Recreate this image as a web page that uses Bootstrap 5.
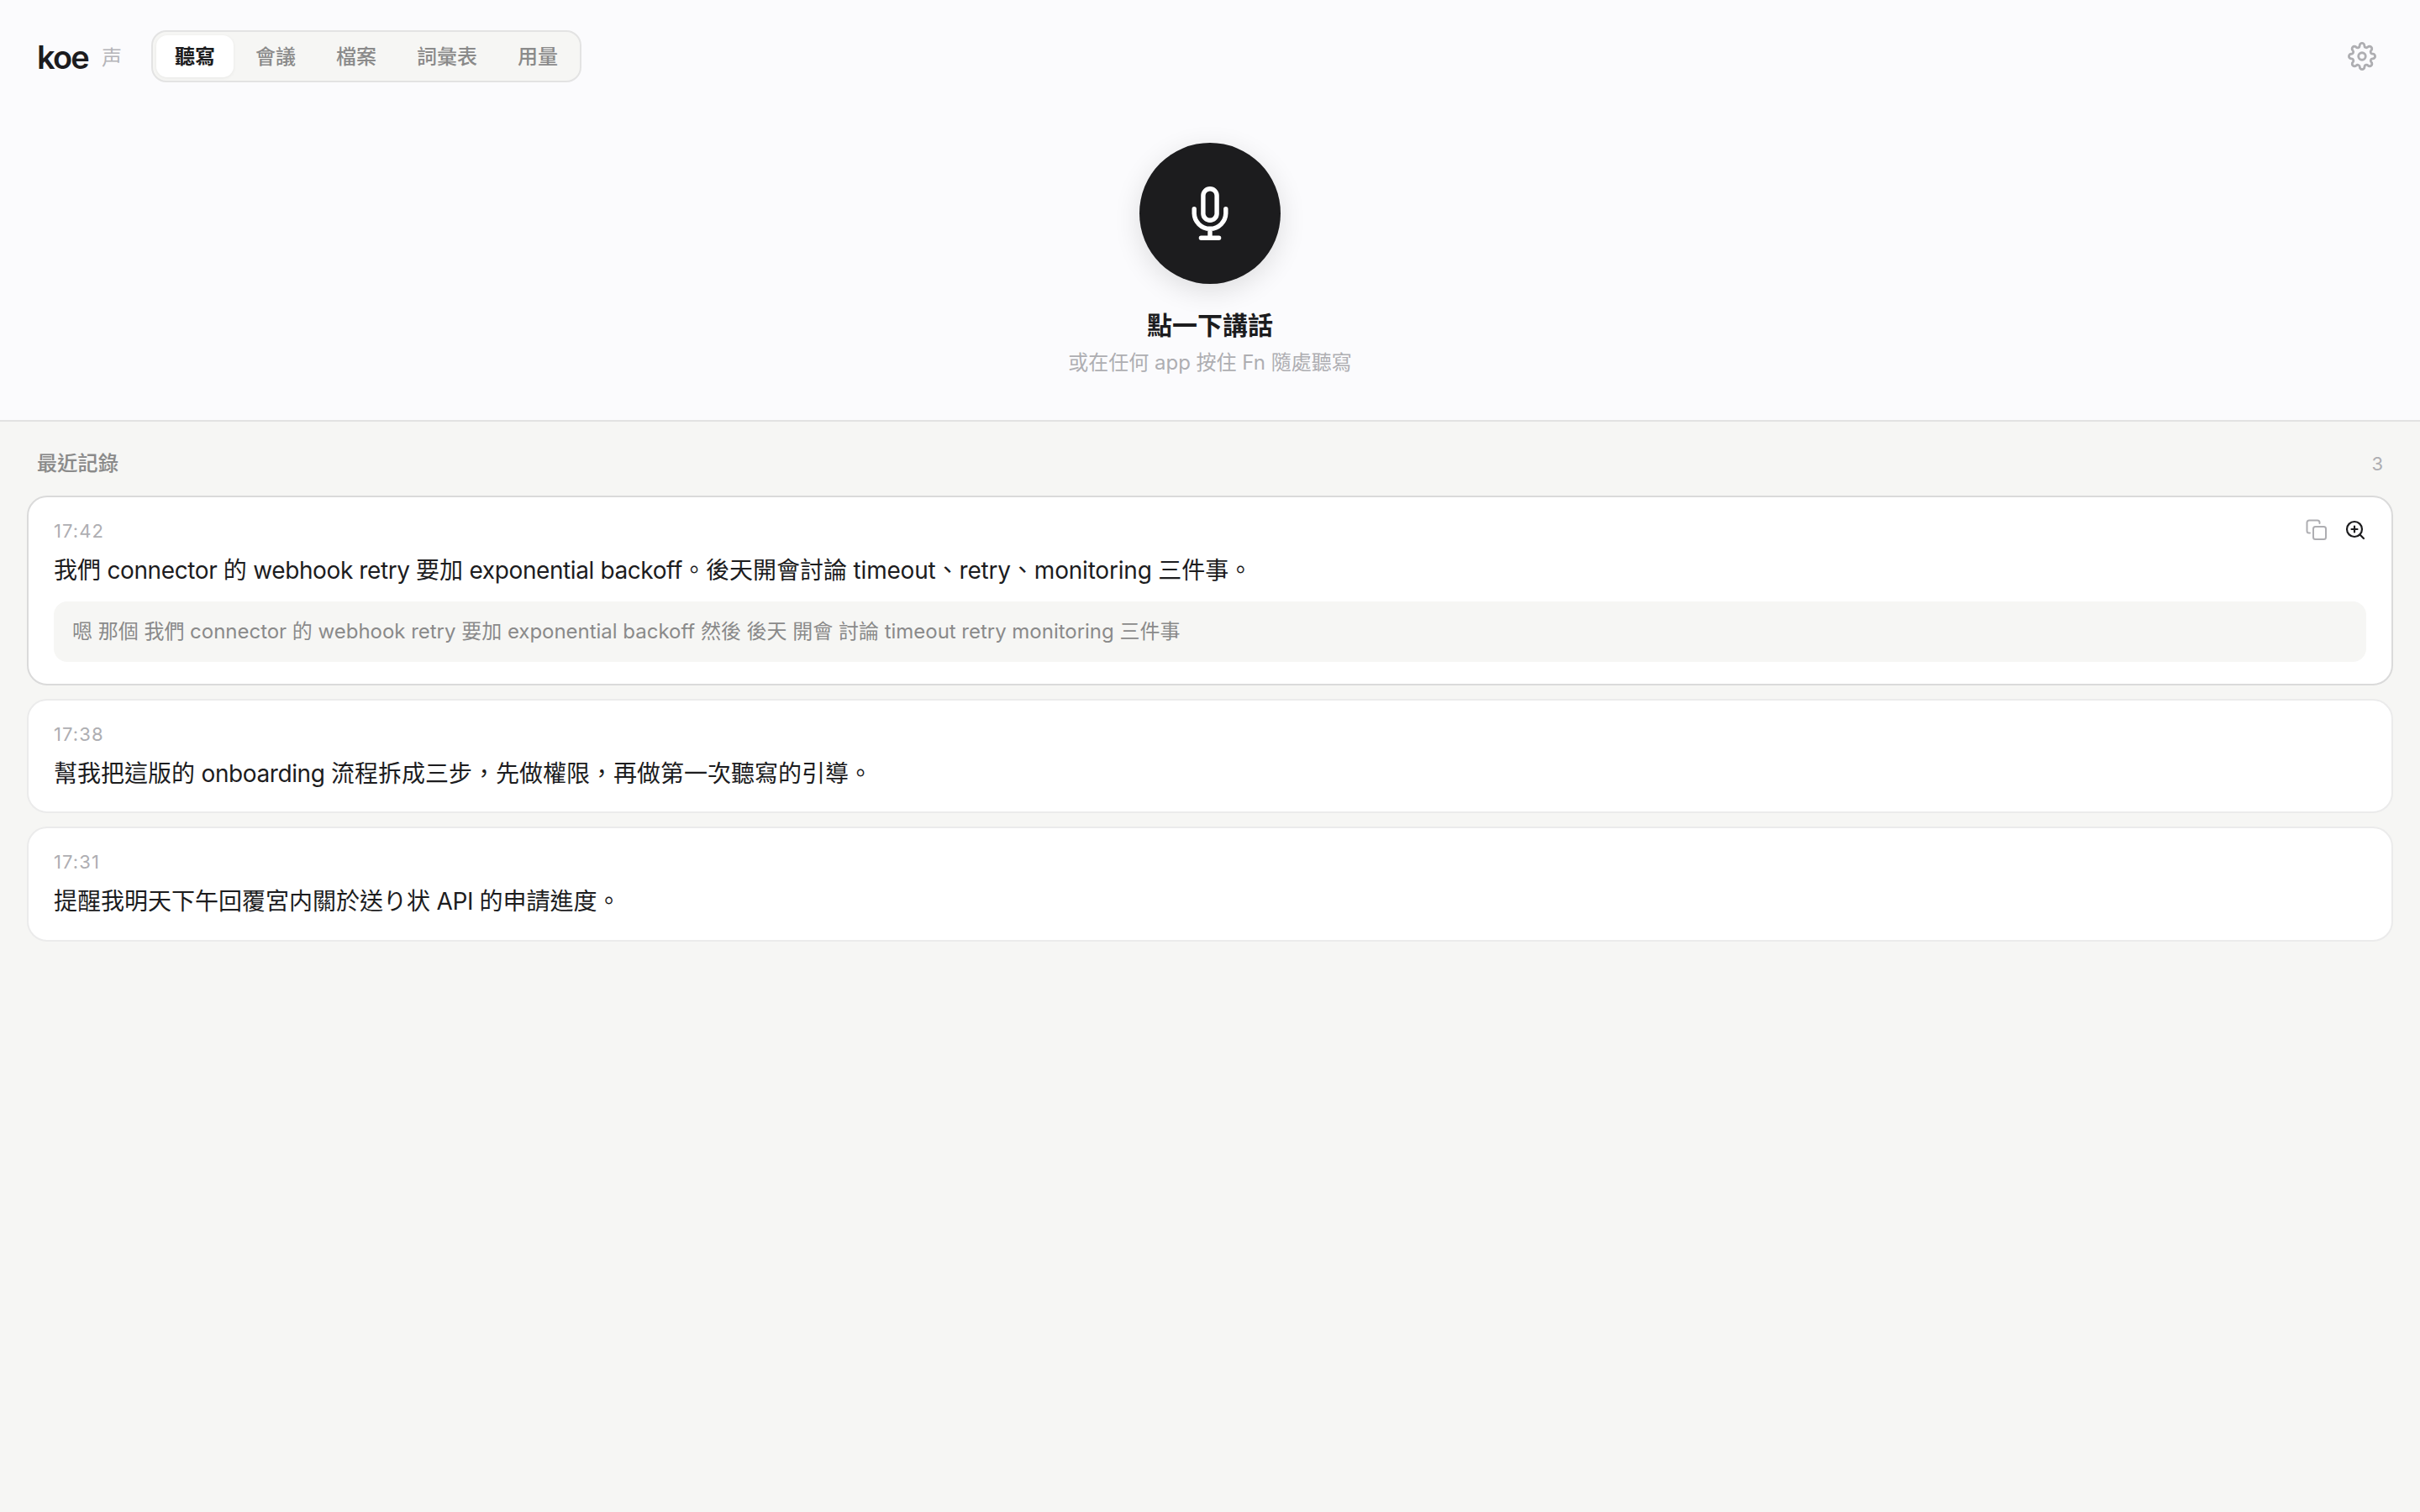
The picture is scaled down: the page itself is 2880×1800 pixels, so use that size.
<!DOCTYPE html>
<html lang="zh-Hant">
<head>
<meta charset="utf-8">
<meta name="viewport" content="width=device-width, initial-scale=1">
<title>koe 声</title>
<link href="https://cdn.jsdelivr.net/npm/bootstrap@5.3.0/dist/css/bootstrap.min.css" rel="stylesheet">
<style>
  body{font-family:Inter,"Noto Sans CJK TC",sans-serif;background:#f6f6f4;color:#1c1c1e;font-size:28px;line-height:40px;min-height:1800px}
  .hero-zone{background:#fbfbfd;border-bottom:2px solid #e2e2e2;height:502px}
  .topbar{padding:36px 44px 0;height:98px}
  .brand-name{font-size:38px;font-weight:600;letter-spacing:-1.8px;line-height:62px;padding:2px 0 0}
  .brand-kanji{font-family:"Noto Sans CJK JP",sans-serif;font-size:24px;font-weight:400;color:#b4b4b8;line-height:62px;margin-left:16px;width:25px}
  .tabs{margin-left:34px;height:62px;border:2px solid #e3e3e3;background:#f6f6f4;border-radius:18px;padding:4px;gap:4px}
  .tabs .nav-link{padding:0 22px;height:50px;line-height:51px;font-size:24px;font-weight:500;color:#8a8a8a;border-radius:13px}
  .tabs .nav-link.active{background:#fff;color:#1c1c1e;font-weight:700;box-shadow:0 1px 4px rgba(0,0,0,.06)}
  .icon-plain{background:none;border:0;padding:0;line-height:0}
  .mic-btn{width:168px;height:168px;background:#1c1c1e;border:0;padding:0;margin-top:72px;box-shadow:0 8px 32px rgba(0,0,0,.12)}
  .mic-title{font-size:30px;font-weight:700;line-height:40px;margin-top:29px}
  .mic-hint{font-size:24px;color:#aeaeb2;line-height:36px;margin-top:7px}
  .list-zone{padding:32px 32px 0}
  .list-head{padding:0 12px;height:36px;margin-bottom:20px;line-height:36px}
  .list-head h2{font-size:24px;font-weight:500;color:#8a8a8a;line-height:36px;margin:0;letter-spacing:.3px;-webkit-text-stroke:.15px #8a8a8a}
  .count,.stamp{font-size:22px;color:#aeaeb2}
  .entry{border:2px solid #ebebeb;border-radius:24px;padding:24px 30px 0;height:136px;background:#fff}
  .entry:last-child{height:137px}
  .entry.open{border-color:#dadada;height:226px}
  .stamp{line-height:32px;letter-spacing:1.1px}
  .actions{gap:20px;height:26px;margin-top:-2px}
  .entry-text{line-height:40px;margin-top:11px;white-space:nowrap}
  .lat{letter-spacing:-.4px}
  .lat-b{letter-spacing:-.2px}
  .raw{background:#f6f6f4;border-radius:16px;height:72px;line-height:71px;margin-top:17px;padding:0 22px;font-size:24px;letter-spacing:-.02px;color:#8a8a8a;white-space:nowrap}
</style>
</head>
<body>
<header class="hero-zone">
  <nav class="topbar d-flex align-items-center">
    <span class="brand-name">koe</span><span class="brand-kanji">声</span>
    <div class="nav tabs flex-nowrap">
      <a class="nav-link active">聽寫</a><a class="nav-link">會議</a><a class="nav-link">檔案</a><a class="nav-link">詞彙表</a><a class="nav-link">用量</a>
    </div>
    <button class="icon-plain ms-auto me-2" aria-label="設定"><svg width="34" height="34" viewBox="0 0 24 24" fill="none" stroke="#aeaeb2" stroke-width="2" stroke-linecap="round" stroke-linejoin="round"><circle cx="12" cy="12" r="3"/><path d="M19.4 15a1.65 1.65 0 0 0 .33 1.82l.06.06a2 2 0 1 1-2.83 2.83l-.06-.06a1.65 1.65 0 0 0-1.82-.33 1.65 1.65 0 0 0-1 1.51V21a2 2 0 0 1-4 0v-.09A1.65 1.65 0 0 0 9 19.4a1.65 1.65 0 0 0-1.82.33l-.06.06a2 2 0 1 1-2.83-2.83l.06-.06a1.65 1.65 0 0 0 .33-1.82 1.65 1.65 0 0 0-1.51-1H3a2 2 0 0 1 0-4h.09A1.65 1.65 0 0 0 4.6 9a1.65 1.65 0 0 0-.33-1.82l-.06-.06a2 2 0 1 1 2.83-2.83l.06.06a1.65 1.65 0 0 0 1.82.33H9a1.65 1.65 0 0 0 1-1.51V3a2 2 0 0 1 4 0v.09a1.65 1.65 0 0 0 1 1.51 1.65 1.65 0 0 0 1.82-.33l.06-.06a2 2 0 1 1 2.83 2.83l-.06.06a1.65 1.65 0 0 0-.33 1.82V9a1.65 1.65 0 0 0 1.51 1H21a2 2 0 0 1 0 4h-.09a1.65 1.65 0 0 0-1.51 1z"/></svg></button>
  </nav>
  <div class="d-flex flex-column align-items-center">
    <button class="mic-btn rounded-circle" aria-label="講話"><svg class="d-block" width="168" height="168" viewBox="0 0 168 168" fill="none" stroke="#fff" stroke-width="5.4" stroke-linecap="round"><rect x="75.9" y="54.7" width="16.2" height="37.6" rx="8.1"/><path d="M65.2 78.7v4.8a18.8 18.8 0 0 0 37.6 0v-4.8M84 102.3v11M73.4 113.3h21.2"/></svg></button>
    <div class="mic-title">點一下講話</div>
    <div class="mic-hint">或在任何 app 按住 Fn 隨處聽寫</div>
  </div>
</header>
<main class="list-zone">
  <div class="list-head d-flex justify-content-between"><h2>最近記錄</h2><span class="count">3</span></div>
  <div class="d-flex flex-column gap-3">
    <article class="entry open">
      <div class="d-flex justify-content-between align-items-center"><span class="stamp">17:42</span>
        <span class="actions d-flex align-items-center">
          <button class="icon-plain" aria-label="複製"><svg width="26" height="26" viewBox="0 0 26 26" fill="none" stroke="#aeaeb2" stroke-width="2" stroke-linecap="round" stroke-linejoin="round"><rect x="9" y="9" width="15" height="15" rx="2.5"/><path d="M5 16.500H4A2.500 2.500 0 0 1 1.500 14V4A2.500 2.500 0 0 1 4 1.500H14A2.500 2.500 0 0 1 16.500 4V5"/></svg></button>
          <button class="icon-plain" aria-label="放大"><svg width="26" height="26" viewBox="0 0 26 26" fill="none" stroke="#1c1c1e" stroke-width="2.2" stroke-linecap="round"><circle cx="12" cy="12" r="9"/><path d="M18.500 18.500L23 23M12 8.500v7M8.500 12h7"/></svg></button>
        </span></div>
      <div class="entry-text">我們<span class="lat"> connector </span>的<span class="lat"> webhook retry </span>要加<span class="lat"> exponential backoff</span>。後天開會討論<span class="lat-b"> timeout</span>、<span class="lat-b">retry</span>、<span class="lat-b">monitoring </span>三件事。</div>
      <div class="raw">嗯 那個 我們 connector 的 webhook retry 要加 exponential backoff 然後 後天 開會 討論 timeout retry monitoring 三件事</div>
    </article>
    <article class="entry"><div class="stamp">17:38</div><div class="entry-text">幫我把這版的<span class="lat"> onboarding </span>流程拆成三步，先做權限，再做第一次聽寫的引導。</div></article>
    <article class="entry"><div class="stamp">17:31</div><div class="entry-text">提醒我明天下午回覆宮<span lang="ja">内</span>關於送り状<span class="lat"> API </span>的申請進度。</div></article>
  </div>
</main>
<script src="https://cdn.jsdelivr.net/npm/bootstrap@5.3.0/dist/js/bootstrap.bundle.min.js"></script>
</body>
</html>
